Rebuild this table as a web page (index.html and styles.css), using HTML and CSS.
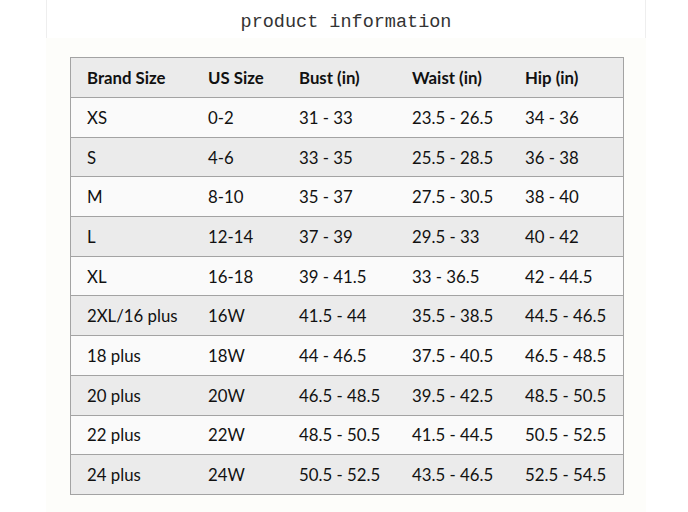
FILE: index.html
```html
<!DOCTYPE html>
<html>
<head>
<meta charset="utf-8">
<link rel="stylesheet" href="styles.css">
</head>
<body>
<div class="page">
  <div class="title-bar">
    <h1 class="title">product information</h1>
  </div>
  <div class="panel">
    <div class="chart">
      <div class="row head"><span>Brand Size</span><span>US Size</span><span>Bust (in)</span><span>Waist (in)</span><span>Hip (in)</span></div>
      <div class="row light"><span>XS</span><span>0-2</span><span>31 - 33</span><span>23.5 - 26.5</span><span>34 - 36</span></div>
      <div class="row dark"><span>S</span><span>4-6</span><span>33 - 35</span><span>25.5 - 28.5</span><span>36 - 38</span></div>
      <div class="row light"><span>M</span><span>8-10</span><span>35 - 37</span><span>27.5 - 30.5</span><span>38 - 40</span></div>
      <div class="row dark"><span>L</span><span>12-14</span><span>37 - 39</span><span>29.5 - 33</span><span>40 - 42</span></div>
      <div class="row light"><span>XL</span><span>16-18</span><span>39 - 41.5</span><span>33 - 36.5</span><span>42 - 44.5</span></div>
      <div class="row dark"><span>2XL/16 plus</span><span>16W</span><span>41.5 - 44</span><span>35.5 - 38.5</span><span>44.5 - 46.5</span></div>
      <div class="row light"><span>18 plus</span><span>18W</span><span>44 - 46.5</span><span>37.5 - 40.5</span><span>46.5 - 48.5</span></div>
      <div class="row dark"><span>20 plus</span><span>20W</span><span>46.5 - 48.5</span><span>39.5 - 42.5</span><span>48.5 - 50.5</span></div>
      <div class="row light"><span>22 plus</span><span>22W</span><span>48.5 - 50.5</span><span>41.5 - 44.5</span><span>50.5 - 52.5</span></div>
      <div class="row dark"><span>24 plus</span><span>24W</span><span>50.5 - 52.5</span><span>43.5 - 46.5</span><span>52.5 - 54.5</span></div>
    </div>
  </div>
</div>
</body>
</html>
```

FILE: styles.css
```css
html, body {
  margin: 0;
  padding: 0;
  background: #ffffff;
}
.page {
  width: 688px;
  height: 512px;
  overflow: hidden;
}
.title-bar {
  margin-left: 46px;
  width: 598px;
  height: 38px;
  border-left: 1px solid #eeeeee;
  border-right: 1px solid #eeeeee;
  display: flex;
  justify-content: center;
}
.title {
  margin: 12px 0 0 0;
  font-family: "Liberation Mono", monospace;
  font-weight: normal;
  font-size: 18.5px;
  line-height: 22px;
  color: #333333;
}
.panel {
  margin-left: 46px;
  width: 600px;
  height: 474px;
  background: #fdfdfa;
  padding: 19px 0 0 24px;
  box-sizing: border-box;
}
.chart {
  width: 554px;
  box-sizing: border-box;
  border: 1px solid #a3a3a3;
  font-family: "Lato", "Noto Sans", sans-serif;
  font-size: 16.8px;
  color: #111111;
}
.row {
  display: grid;
  grid-template-columns: 121px 91px 113px 113px 1fr;
  align-items: center;
  height: 39.7px;
  box-sizing: border-box;
  border-top: 1px solid #a3a3a3;
}
.row span {
  padding-left: 16px;
  white-space: nowrap;
}
.row.head {
  border-top: none;
  height: 39px;
  background: #ebebeb;
  font-weight: bold;
}
.row.light {
  background: #fafafa;
}
.row.dark {
  background: #ebebeb;
}
```
